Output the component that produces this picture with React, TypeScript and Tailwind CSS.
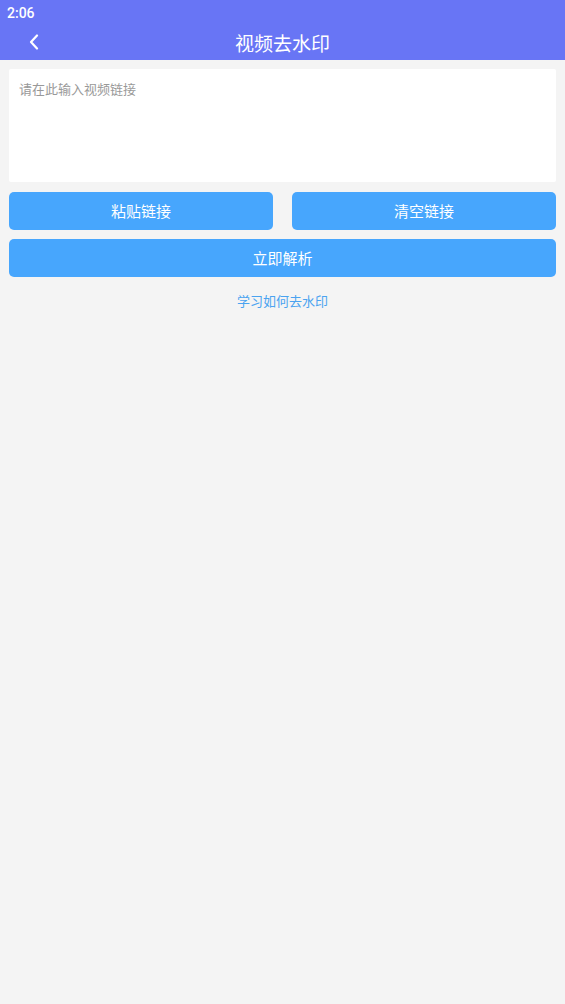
export default function App() {
  return (
    <div
      className="min-h-screen bg-[#f4f4f4]"
      style={{ fontFamily: '"Noto Sans CJK SC", Roboto, sans-serif' }}
    >
      <header className="bg-[#6875f5] text-white">
        <div className="h-[24px] px-[7px] flex items-center text-[14px] font-medium leading-none pt-[1px]" style={{ fontFamily: "Roboto, sans-serif" }}>
          2:06
        </div>
        <div className="relative h-[36px] flex items-center justify-center">
          <button className="absolute left-[26px] top-[9px] w-[16px] h-[18px] flex items-center justify-center">
            <svg width="12" height="16" viewBox="0 0 12 16" fill="none">
              <path d="M9 1.5L3 8l6 6.5" stroke="white" strokeWidth="2.2" strokeLinecap="round" strokeLinejoin="round" />
            </svg>
          </button>
          <h1 className="text-[19px] leading-none font-normal">视频去水印</h1>
        </div>
      </header>

      <main className="px-[9px] pt-[9px]">
        <textarea
          className="block w-full h-[113px] bg-white rounded-[2px] px-[10px] py-[10px] text-[13px] leading-[20px] text-[#333] placeholder:text-[#999] resize-none outline-none"
          placeholder="请在此输入视频链接"
        />
        <div className="mt-[10px] grid grid-cols-2 gap-[19px]">
          <button className="h-[38px] rounded-[5px] bg-[#47a6fd] text-white text-[15px]">粘贴链接</button>
          <button className="h-[38px] rounded-[5px] bg-[#47a6fd] text-white text-[15px]">清空链接</button>
        </div>
        <button className="mt-[9px] w-full h-[38px] rounded-[5px] bg-[#47a6fd] text-white text-[15px]">立即解析</button>
        <p className="mt-[14px] text-center text-[13px] leading-[20px] text-[#4aa3f0]">学习如何去水印</p>
      </main>
    </div>
  );
}
